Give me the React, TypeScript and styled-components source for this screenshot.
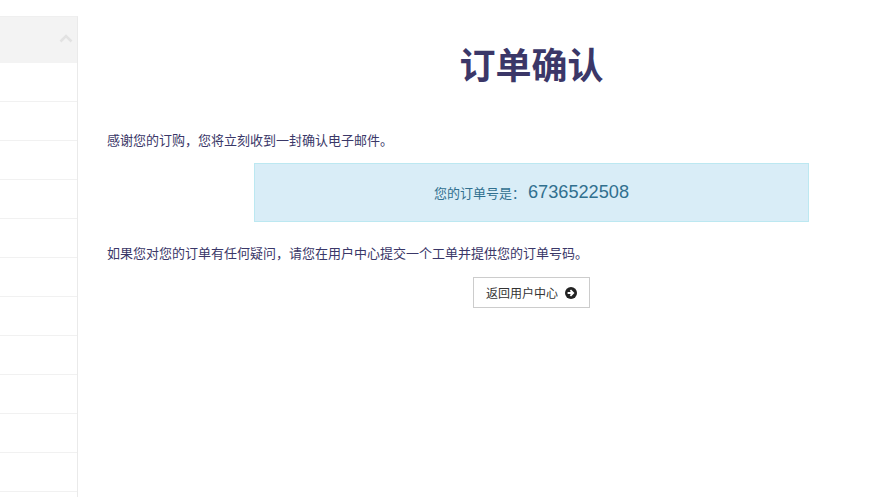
import React from "react";
import styled, { createGlobalStyle } from "styled-components";

const Global = createGlobalStyle`
  html, body { margin: 0; padding: 0; background: #fff; overflow: hidden; }
  body { font-family: "Liberation Sans", "Noto Sans CJK SC", sans-serif; }
`;

const Page = styled.div`
  display: flex;
  align-items: flex-start;
  width: 895px;
  height: 497px;
  overflow: hidden;
`;

const Sidebar = styled.aside`
  flex: none;
  width: 77px;
  height: 480px;
  margin-top: 16px;
  border-top: 1px solid #efefef;
  border-right: 1px solid #eaeaea;
  overflow: hidden;
`;

const SideHeader = styled.div`
  display: flex;
  align-items: center;
  justify-content: flex-end;
  height: 46px;
  padding: 0 4px 3px 0;
  background: #f3f3f3;
  box-sizing: border-box;
`;

const SideRow = styled.div`
  height: 38px;
  border-bottom: 1px solid #f1f1f1;
`;

const Main = styled.main`
  flex: none;
  box-sizing: border-box;
  width: 849px;
  margin-left: 29px;
  display: flex;
  flex-direction: column;
  color: #3a3768;
`;

const Title = styled.h1`
  margin: 42px 0 0;
  height: 50px;
  font-size: 36px;
  line-height: 50px;
  font-weight: 700;
  text-align: center;
  color: #3b3768;
`;

const Paragraph = styled.p<{ $top: number }>`
  margin: ${(p) => p.$top}px 0 0;
  font-size: 13px;
  line-height: 20px;
  color: #3a3768;
`;

const Alert = styled.div`
  box-sizing: border-box;
  align-self: center;
  width: 555px;
  height: 59px;
  margin-top: 12px;
  padding-bottom: 1px;
  display: flex;
  align-items: center;
  justify-content: center;
  gap: 3px;
  background: #d9edf7;
  border: 1px solid #bce8f1;
  color: #31708f;
  font-size: 13px;
`;

const OrderNumber = styled.span`
  font-size: 18.2px;
  line-height: 20px;
`;

const BackButton = styled.a`
  box-sizing: border-box;
  align-self: center;
  display: flex;
  align-items: center;
  justify-content: center;
  gap: 7px;
  width: 117px;
  height: 31px;
  margin-top: 13px;
  border: 1px solid #ccc;
  background: #fff;
  color: #333;
  font-size: 12px;
`;

export default function App() {
  return (
    <Page>
      <Global />
      <Sidebar>
        <SideHeader>
          <svg width="14" height="9" viewBox="0 0 14 9" aria-hidden>
            <path d="M1.5 7.5 7 2l5.5 5.5" fill="none" stroke="#e2e2e2" strokeWidth="2.6" />
          </svg>
        </SideHeader>
        {Array.from({ length: 12 }, (_, i) => (
          <SideRow key={i} />
        ))}
      </Sidebar>
      <Main>
        <Title>订单确认</Title>
        <Paragraph $top={39}>感谢您的订购，您将立刻收到一封确认电子邮件。</Paragraph>
        <Alert>
          <span>您的订单号是：</span>
          <OrderNumber>6736522508</OrderNumber>
        </Alert>
        <Paragraph $top={22}>如果您对您的订单有任何疑问，请您在用户中心提交一个工单并提供您的订单号码。</Paragraph>
        <BackButton>
          返回用户中心
          <svg width="12" height="12" viewBox="0 0 12 12" aria-hidden>
            <circle cx="6" cy="6" r="6" fill="#222" />
            <path d="M2.6 6h5M5.4 3.2 8.2 6 5.4 8.8" fill="none" stroke="#fff" strokeWidth="1.8" />
          </svg>
        </BackButton>
      </Main>
    </Page>
  );
}
